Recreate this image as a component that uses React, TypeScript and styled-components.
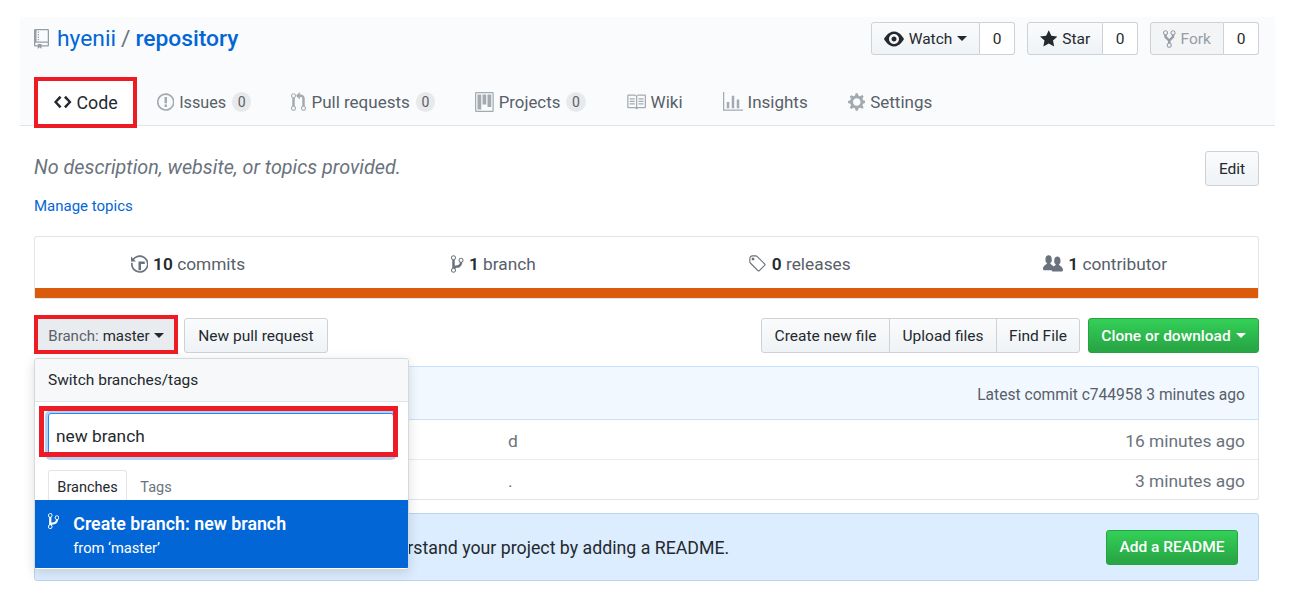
import React from "react";
import styled, { createGlobalStyle } from "styled-components";

const GlobalStyle = createGlobalStyle`
  html, body {
    margin: 0;
    padding: 0;
    background: #fff;
  }
  body {
    width: 1290px;
    height: 600px;
    overflow: hidden;
    font-family: Roboto, "Liberation Sans", sans-serif;
    color: #24292e;
  }
  * {
    box-sizing: border-box;
  }
`;

const ICONS: Record<string, { w: number; d: string }> = {
  repo: { w: 12, d: "M4 9H3V8h1v1zm0-3H3v1h1V6zm0-2H3v1h1V4zm0-2H3v1h1V2zm8-1v12c0 .55-.45 1-1 1H6v2l-1.5-1.5L3 16v-2H1c-.55 0-1-.45-1-1V1c0-.55.45-1 1-1h10c.55 0 1 .45 1 1zm-1 10H1v2h2v-1h3v1h5v-2zm0-10H2v9h9V1z" },
  code: { w: 14, d: "M9.5 3L8 4.5 11.5 8 8 11.5 9.5 13 14 8 9.5 3zm-5 0L0 8l4.5 5L6 11.5 2.5 8 6 4.5 4.5 3z" },
  issue: { w: 14, d: "M7 2.3c3.14 0 5.7 2.56 5.7 5.7s-2.56 5.7-5.7 5.7A5.71 5.71 0 0 1 1.3 8c0-3.14 2.56-5.7 5.7-5.7zM7 1C3.14 1 0 4.14 0 8s3.14 7 7 7 7-3.14 7-7-3.14-7-7-7zm1 3H6v5h2V4zm0 6H6v2h2v-2z" },
  pull: { w: 12, d: "M11 11.28V5c-.03-.78-.34-1.47-.94-2.06C9.46 2.35 8.78 2.03 8 2H7V0L4 3l3 3V4h1c.27.02.48.11.69.31.21.2.3.42.31.69v6.28A1.993 1.993 0 0 0 10 15a1.993 1.993 0 0 0 1-3.72zm-1 2.92c-.66 0-1.2-.55-1.2-1.2 0-.65.55-1.2 1.2-1.2.65 0 1.2.55 1.2 1.2 0 .65-.55 1.2-1.2 1.2zM4 3c0-1.11-.89-2-2-2a1.993 1.993 0 0 0-1 3.72v6.56A1.993 1.993 0 0 0 2 15a1.993 1.993 0 0 0 1-3.72V4.72c.59-.34 1-.98 1-1.72zm-.8 10c0 .66-.55 1.2-1.2 1.2-.65 0-1.2-.55-1.2-1.2 0-.65.55-1.2 1.2-1.2.65 0 1.2.55 1.2 1.2zM2 4.2C1.34 4.2.8 3.65.8 3c0-.65.55-1.2 1.2-1.2.65 0 1.2.55 1.2 1.2 0 .65-.55 1.2-1.2 1.2z" },
  project: { w: 15, d: "M10 12h3V2h-3v10zm-4-2h3V2H6v8zm-4 4h3V2H2v12zm-1 1h13V1H1v14zM14 0H1a1 1 0 0 0-1 1v14a1 1 0 0 0 1 1h13a1 1 0 0 0 1-1V1a1 1 0 0 0-1-1z" },
  book: { w: 16, d: "M3 5h4v1H3V5zm0 3h4V7H3v1zm0 2h4V9H3v1zm11-5h-4v1h4V5zm0 2h-4v1h4V7zm0 2h-4v1h4V9zm2-6v9c0 .55-.45 1-1 1H9.5l-1 1-1-1H2c-.55 0-1-.45-1-1V3c0-.55.45-1 1-1h5.5l1 1 1-1H15c.55 0 1 .45 1 1zm-8 .5L7.5 3H2v9h6V3.5zm7-.5H9.5l-.5.5V12h6V3z" },
  graph: { w: 16, d: "M16 14v1H0V0h1v14h15zM5 13H3V8h2v5zm4 0H7V3h2v10zm4 0h-2V6h2v7z" },
  gear: { w: 14, d: "M14 8.77v-1.6l-1.94-.64-.45-1.09.88-1.84-1.13-1.13-1.81.91-1.09-.45-.69-1.92h-1.6l-.63 1.94-1.11.45-1.84-.88-1.13 1.13.91 1.81-.45 1.09L0 7.23v1.59l1.94.64.45 1.09-.88 1.84 1.13 1.13 1.81-.91 1.09.45.69 1.92h1.59l.63-1.94 1.11-.45 1.84.88 1.13-1.13-.92-1.81.47-1.09L14 8.75v.02zM7 11c-1.66 0-3-1.34-3-3s1.34-3 3-3 3 1.34 3 3-1.34 3-3 3z" },
  eye: { w: 16, d: "M8.06 2C3 2 0 8 0 8s3 6 8.06 6C13 14 16 8 16 8s-3-6-7.94-6zM8 12c-2.2 0-4-1.78-4-4 0-2.2 1.8-4 4-4 2.22 0 4 1.8 4 4 0 2.22-1.78 4-4 4zm2-4c0 1.11-.89 2-2 2-1.11 0-2-.89-2-2 0-1.11.89-2 2-2 1.11 0 2 .89 2 2z" },
  star: { w: 14, d: "M14 6l-4.9-.64L7 1 4.9 5.36 0 6l3.6 3.26L2.67 14 7 11.67 11.33 14l-.93-4.74L14 6z" },
  fork: { w: 10, d: "M8 1a1.993 1.993 0 0 0-1 3.72V6L5 8 3 6V4.72A1.993 1.993 0 0 0 2 1a1.993 1.993 0 0 0-1 3.72V6.5l3 3v1.78A1.993 1.993 0 0 0 5 15a1.993 1.993 0 0 0 1-3.72V9.5l3-3V4.72A1.993 1.993 0 0 0 8 1zM2 4.2C1.34 4.2.8 3.65.8 3c0-.65.55-1.2 1.2-1.2.65 0 1.2.55 1.2 1.2 0 .65-.55 1.2-1.2 1.2zm3 10c-.66 0-1.2-.55-1.2-1.2 0-.65.55-1.2 1.2-1.2.65 0 1.2.55 1.2 1.2 0 .65-.55 1.2-1.2 1.2zm3-10c-.66 0-1.2-.55-1.2-1.2 0-.65.55-1.2 1.2-1.2.65 0 1.2.55 1.2 1.2 0 .65-.55 1.2-1.2 1.2z" },
  history: { w: 14, d: "M8 13H6V6h5v2H8v5zM7 1C4.81 1 2.87 2.02 1.59 3.59L0 2v4h4L2.5 4.5C3.55 3.17 5.17 2.3 7 2.3c3.14 0 5.7 2.56 5.7 5.7s-2.56 5.7-5.7 5.7A5.71 5.71 0 0 1 1.3 8c0-.34.03-.67.09-1H.08C.03 7.33 0 7.66 0 8c0 3.86 3.14 7 7 7s7-3.14 7-7-3.14-7-7-7z" },
  branch: { w: 10, d: "M10 5c0-1.11-.89-2-2-2a1.993 1.993 0 0 0-1 3.72v.3c-.02.52-.23.98-.63 1.38-.4.4-.86.61-1.38.63-.83.02-1.48.16-2 .45V4.72a1.993 1.993 0 0 0-1-3.72C.88 1 0 1.89 0 3a2 2 0 0 0 1 1.72v6.56c-.59.35-1 .99-1 1.72 0 1.11.89 2 2 2 1.11 0 2-.89 2-2 0-.53-.2-1-.53-1.36.09-.06.48-.41.59-.47.25-.11.56-.17.94-.17 1.05-.05 1.95-.45 2.75-1.25S8.95 7.77 9 6.73h-.02C9.59 6.37 10 5.73 10 5zM2 1.8c.66 0 1.2.55 1.2 1.2 0 .65-.55 1.2-1.2 1.2C1.35 4.2.8 3.65.8 3c0-.65.55-1.2 1.2-1.2zm0 12.41c-.66 0-1.2-.55-1.2-1.2 0-.65.55-1.2 1.2-1.2.65 0 1.2.55 1.2 1.2 0 .65-.55 1.2-1.2 1.2zm6-8c-.66 0-1.2-.55-1.2-1.2 0-.65.55-1.2 1.2-1.2.65 0 1.2.55 1.2 1.2 0 .65-.55 1.2-1.2 1.2z" },
  tag: { w: 15, d: "M7.73 1.73C7.26 1.26 6.62 1 5.96 1H3.5C2.13 1 1 2.13 1 3.5v2.47c0 .66.27 1.3.73 1.77l6.06 6.06c.39.39 1.02.39 1.41 0l4.59-4.59a.996.996 0 0 0 0-1.41L7.73 1.73zM2.38 7.09c-.31-.3-.47-.7-.47-1.13V3.5c0-.88.72-1.59 1.59-1.59h2.47c.42 0 .83.16 1.13.47l6.14 6.13-4.73 4.73-6.13-6.15zM3.01 3h2v2H3V3h.01z" },
  people: { w: 16, d: "M16 12.999c0 .439-.45 1-1 1H7.995c-.539 0-.994-.447-.995-.999H1c-.54 0-1-.561-1-1 0-2.634 3-4 3-4s.229-.409 0-1c-.841-.621-1.058-.59-1-3 .058-2.419 1.367-3 2.5-3s2.442.58 2.5 3c.058 2.41-.159 2.379-1 3-.229.59 0 1 0 1s1.549.711 2.42 2.088C9.196 9.369 10 8.999 10 8.999s.229-.409 0-1c-.841-.62-1.058-.59-1-3 .058-2.419 1.367-3 2.5-3s2.437.581 2.495 3c.059 2.41-.158 2.38-1 3-.229.59 0 1 0 1s3.005 1.366 3.005 4z" },
};

function Icon(props: { name: string; size?: number; color?: string }) {
  const icon = ICONS[props.name];
  const size = props.size ?? 18;
  return (
    <svg
      width={(icon.w * size) / 16}
      height={size}
      viewBox={`0 0 ${icon.w} 16`}
      fill={props.color ?? "currentColor"}
      style={{ flex: "none" }}
    >
      <path fillRule="evenodd" d={icon.d} />
    </svg>
  );
}

const Caret = styled.span<{ $color?: string; $gap?: number }>`
  display: inline-block;
  width: 0;
  height: 0;
  margin-left: ${(p) => p.$gap ?? 5}px;
  border-top: 5px solid ${(p) => p.$color ?? "#24292e"};
  border-left: 5px solid transparent;
  border-right: 5px solid transparent;
`;

const Highlight = styled.div<{ $inset: string; $width?: number }>`
  position: absolute;
  inset: ${(p) => p.$inset};
  border: ${(p) => p.$width ?? 4}px solid #ed1c24;
  pointer-events: none;
  z-index: 5;
`;

/* repo head */
const PageHead = styled.header`
  margin: 17px 15px 0 20px;
  padding: 5px 16px 0 14px;
  height: 109px;
  background: #fafbfc;
  border-bottom: 1px solid #e1e4e8;
`;
const HeadTop = styled.div`
  display: flex;
  align-items: center;
  justify-content: space-between;
  height: 33px;
`;
const RepoTitle = styled.h1`
  display: flex;
  align-items: center;
  margin: 0;
  font-size: 22.8px;
  font-weight: 400;
  color: #6a737d;
  svg {
    margin-right: 8px;
    color: #959da5;
  }
`;
const RepoLink = styled.a<{ $strong?: boolean }>`
  color: #0366d6;
  font-weight: ${(p) => (p.$strong ? 500 : 400)};
`;
const Slash = styled.span`
  margin: 0 5px;
`;
const HeadActions = styled.div`
  display: flex;
  gap: 12px;
`;
const Counted = styled.div`
  display: flex;
  height: 33px;
`;
const HeadButton = styled.div<{ $width: number; $muted?: boolean }>`
  display: flex;
  align-items: center;
  justify-content: center;
  gap: 5px;
  width: ${(p) => p.$width}px;
  font-size: 15.5px;
  color: ${(p) => (p.$muted ? "#959da5" : "#24292e")};
  background: ${(p) => (p.$muted ? "#f3f4f6" : "linear-gradient(#fafbfc, #eff3f6)")};
  border: 1px solid #ced1d5;
  border-radius: 3px 0 0 3px;
`;
const Count = styled.div`
  display: flex;
  align-items: center;
  justify-content: center;
  width: 35px;
  font-size: 15.5px;
  background: #fff;
  border: 1px solid #ced1d5;
  border-left: 0;
  border-radius: 0 3px 3px 0;
`;
const Tabs = styled.nav`
  display: flex;
  margin-top: 22px;
  height: 49px;
`;
const Tab = styled.a<{ $active?: boolean; $size?: number }>`
  position: relative;
  display: flex;
  align-items: center;
  gap: 5px;
  padding: 1px ${(p) => (p.$active ? 19 : 20)}px 0;
  margin-left: ${(p) => (p.$active ? 1 : 0)}px;
  font-size: ${(p) => p.$size ?? 17}px;
  color: ${(p) => (p.$active ? "#24292e" : "#586069")};
  background: ${(p) => (p.$active ? "#fff" : "transparent")};
  svg {
    color: ${(p) => (p.$active ? "#24292e" : "#a3aab1")};
  }
`;
const Badge = styled.span`
  display: inline-block;
  margin-left: 1px;
  padding: 0 5.7px;
  font-size: 14px;
  line-height: 20px;
  color: #586069;
  background: rgba(27, 31, 35, 0.08);
  border-radius: 10px;
`;

/* page body */
const Main = styled.main`
  width: 1225px;
  margin: 25px 0 0 34px;
`;
const MetaRow = styled.div`
  display: flex;
  align-items: center;
  justify-content: space-between;
  height: 35px;
`;
const Description = styled.p`
  margin: 0 0 3px;
  font-size: 19.8px;
  font-style: italic;
  color: #6a737d;
`;
const Button = styled.div<{ $width: number }>`
  display: flex;
  align-items: center;
  justify-content: center;
  width: ${(p) => p.$width}px;
  height: 35px;
  font-size: 15.5px;
  background: linear-gradient(#fafbfc, #eff3f6);
  border: 1px solid #ced1d5;
  border-radius: 3px;
`;
const TopicsLink = styled.a`
  display: block;
  margin-top: 10px;
  font-size: 15px;
  line-height: 20px;
  color: #0366d6;
`;
const Summary = styled.section`
  margin-top: 20px;
  height: 63px;
  background: #fff;
  border: 1px solid #e1e4e8;
  border-bottom-width: 2px;
  border-radius: 3px;
`;
const Stats = styled.div`
  display: grid;
  grid-template-columns: repeat(4, 1fr);
  height: 51px;
  padding-top: 2px;
`;
const Stat = styled.div`
  display: flex;
  align-items: center;
  justify-content: center;
  gap: 5px;
  font-size: 17.3px;
  color: #586069;
  svg {
    color: #6a737d;
  }
  b {
    font-weight: 600;
    color: #24292e;
  }
`;
const LangBar = styled.div`
  height: 10px;
  background: #da5b0b;
`;
const FileNav = styled.div`
  display: flex;
  align-items: center;
  margin-top: 19px;
  height: 35px;
`;
const BranchArea = styled.div`
  position: relative;
  display: flex;
  gap: 6px;
`;
const BranchButton = styled.div`
  position: relative;
  display: flex;
  align-items: center;
  justify-content: center;
  width: 144px;
  height: 35px;
  font-size: 15px;
  background: #e9ecef;
  border-radius: 3px;
  span.label {
    color: #586069;
    margin-right: 4px;
  }
`;
const FileActions = styled.div`
  display: flex;
  margin-left: auto;
  gap: 8px;
`;
const Group = styled.div`
  display: flex;
  & > div {
    border-radius: 0;
    margin-left: -1px;
  }
  & > div:first-child {
    margin-left: 0;
    border-radius: 3px 0 0 3px;
  }
  & > div:last-child {
    border-radius: 0 3px 3px 0;
  }
`;
const GreenButton = styled.div<{ $width: number }>`
  display: flex;
  align-items: center;
  justify-content: center;
  width: ${(p) => p.$width}px;
  height: 35px;
  font-size: 15.5px;
  font-weight: 500;
  color: #fff;
  background: linear-gradient(#34d058, #28a745 90%);
  border: 1px solid #27a243;
  border-radius: 3px;
`;

/* branch dropdown */
const Dropdown = styled.div`
  position: absolute;
  top: 40px;
  left: 0;
  z-index: 4;
  width: 375px;
  height: 212px;
  background: #fff;
  border: 1px solid #d5d8dc;
  border-radius: 3px;
  box-shadow: 0 3px 12px rgba(27, 31, 35, 0.15);
  overflow: hidden;
`;
const DropHead = styled.div`
  display: flex;
  align-items: center;
  height: 43px;
  padding: 0 13px;
  font-size: 15.5px;
  background: #f6f8fa;
  border-bottom: 1px solid #e1e4e8;
`;
const DropFilter = styled.div`
  padding: 11px 14px 13px 13px;
  background: #fff;
`;
const FilterInput = styled.div`
  display: flex;
  align-items: center;
  height: 44px;
  padding: 2px 0 0 7px;
  font-size: 17.3px;
  color: #24292e;
  background: #fff;
  border: 1px solid #2188ff;
  border-radius: 3px;
  box-shadow: 0 0 0 3px rgba(3, 102, 214, 0.3);
`;
const DropTabs = styled.div`
  display: flex;
  height: 30px;
  padding-left: 13px;
`;
const DropTab = styled.div<{ $active?: boolean }>`
  display: flex;
  align-items: center;
  justify-content: center;
  width: ${(p) => (p.$active ? 79 : 58)}px;
  padding-top: 4px;
  font-size: 14.5px;
  color: ${(p) => (p.$active ? "#24292e" : "#6a737d")};
  border: 1px solid ${(p) => (p.$active ? "#e1e4e8" : "transparent")};
  border-bottom: 0;
  border-radius: 3px 3px 0 0;
`;
const CreateItem = styled.div`
  display: flex;
  gap: 14px;
  height: 68px;
  padding: 12px 13px;
  color: #fff;
  background: #0366d6;
`;
const CreateText = styled.div`
  strong {
    display: block;
    font-size: 17.8px;
    line-height: 24px;
    font-weight: 600;
  }
  span {
    display: block;
    margin-top: 2px;
    font-size: 14.7px;
    line-height: 20px;
  }
`;

/* file table */
const FileTable = styled.section`
  margin-top: 13px;
  height: 134px;
  border: 1px solid #e1e4e8;
  border-top: 0;
  border-radius: 3px;
`;
const CommitTease = styled.div`
  display: flex;
  align-items: center;
  justify-content: flex-end;
  height: 54px;
  margin: 0 -1px;
  padding: 3px 13px 0 0;
  font-size: 15.6px;
  color: #586069;
  background: #f1f8ff;
  border: 1px solid #c8e1ff;
  border-radius: 3px 3px 0 0;
`;
const Row = styled.div<{ $last?: boolean }>`
  display: grid;
  grid-template-columns: 473px 1fr auto;
  align-items: center;
  height: ${(p) => (p.$last ? 39 : 40)}px;
  padding: 2px 13px 0 0;
  font-size: 17.4px;
  color: #6a737d;
  border-bottom: ${(p) => (p.$last ? 0 : "1px solid #eaecef")};
`;
const Readme = styled.section`
  display: flex;
  align-items: center;
  justify-content: space-between;
  margin-top: 13px;
  height: 68px;
  padding: 0 20px 0 16px;
  background: #dbedff;
  border: 1px solid #bcd4ea;
  border-radius: 3px;
`;
const ReadmeText = styled.span`
  margin-top: 2px;
  font-size: 17.75px;
`;

export default function App() {
  return (
    <>
      <GlobalStyle />
      <PageHead>
        <HeadTop>
          <RepoTitle>
            <Icon name="repo" size={20} />
            <RepoLink>hyenii</RepoLink>
            <Slash>/</Slash>
            <RepoLink $strong>repository</RepoLink>
          </RepoTitle>
          <HeadActions>
            <Counted>
              <HeadButton $width={109}>
                <Icon name="eye" size={20} />
                Watch
                <Caret $gap={0} />
              </HeadButton>
              <Count>0</Count>
            </Counted>
            <Counted>
              <HeadButton $width={76}>
                <Icon name="star" size={20} />
                Star
              </HeadButton>
              <Count>0</Count>
            </Counted>
            <Counted>
              <HeadButton $width={74} $muted>
                <Icon name="fork" size={20} />
                Fork
              </HeadButton>
              <Count>0</Count>
            </Counted>
          </HeadActions>
        </HeadTop>
        <Tabs>
          <Tab $active $size={17.8}>
            <Icon name="code" size={20} />
            Code
            <Highlight $inset="0 0 -2px -1px" />
          </Tab>
          <Tab $size={16.2}>
            <Icon name="issue" size={20} />
            Issues
            <Badge>0</Badge>
          </Tab>
          <Tab>
            <Icon name="pull" size={20} />
            Pull requests
            <Badge>0</Badge>
          </Tab>
          <Tab $size={16.8}>
            <Icon name="project" size={20} />
            Projects
            <Badge>0</Badge>
          </Tab>
          <Tab>
            <Icon name="book" size={20} />
            Wiki
          </Tab>
          <Tab>
            <Icon name="graph" size={20} />
            Insights
          </Tab>
          <Tab>
            <Icon name="gear" size={20} />
            Settings
          </Tab>
        </Tabs>
      </PageHead>
      <Main>
        <MetaRow>
          <Description>No description, website, or topics provided.</Description>
          <Button $width={54}>Edit</Button>
        </MetaRow>
        <TopicsLink>Manage topics</TopicsLink>
        <Summary>
          <Stats>
            <Stat>
              <Icon name="history" size={20} />
              <span>
                <b>10</b> commits
              </span>
            </Stat>
            <Stat>
              <Icon name="branch" size={20} />
              <span>
                <b>1</b> branch
              </span>
            </Stat>
            <Stat>
              <Icon name="tag" size={20} />
              <span>
                <b>0</b> releases
              </span>
            </Stat>
            <Stat>
              <Icon name="people" size={20} />
              <span>
                <b>1</b> contributor
              </span>
            </Stat>
          </Stats>
          <LangBar />
        </Summary>
        <FileNav>
          <BranchArea>
            <BranchButton>
              <span className="label">Branch:</span>
              master
              <Caret $gap={4} />
              <Highlight $inset="-3px 0 -1px 0" />
            </BranchButton>
            <Button $width={144}>New pull request</Button>
            <Dropdown>
              <DropHead>Switch branches/tags</DropHead>
              <DropFilter>
                <FilterInput>new branch</FilterInput>
              </DropFilter>
              <DropTabs>
                <DropTab $active>Branches</DropTab>
                <DropTab>Tags</DropTab>
              </DropTabs>
              <CreateItem>
                <Icon name="branch" size={18} />
                <CreateText>
                  <strong>Create branch: new branch</strong>
                  <span>from ‘master’</span>
                </CreateText>
              </CreateItem>
              <Highlight $inset="47px 10px 112px 4px" $width={5} />
            </Dropdown>
          </BranchArea>
          <FileActions>
            <Group>
              <Button $width={129}>Create new file</Button>
              <Button $width={108}>Upload files</Button>
              <Button $width={84}>Find File</Button>
            </Group>
            <GreenButton $width={171}>
              Clone or download
              <Caret $color="#fff" />
            </GreenButton>
          </FileActions>
        </FileNav>
        <FileTable>
          <CommitTease>Latest commit c744958 3 minutes ago</CommitTease>
          <Row>
            <span />
            <span>d</span>
            <span>16 minutes ago</span>
          </Row>
          <Row $last>
            <span />
            <span>.</span>
            <span>3 minutes ago</span>
          </Row>
        </FileTable>
        <Readme>
          <ReadmeText>Help people interested in this repository understand your project by adding a README.</ReadmeText>
          <GreenButton $width={132}>Add a README</GreenButton>
        </Readme>
      </Main>
    </>
  );
}
